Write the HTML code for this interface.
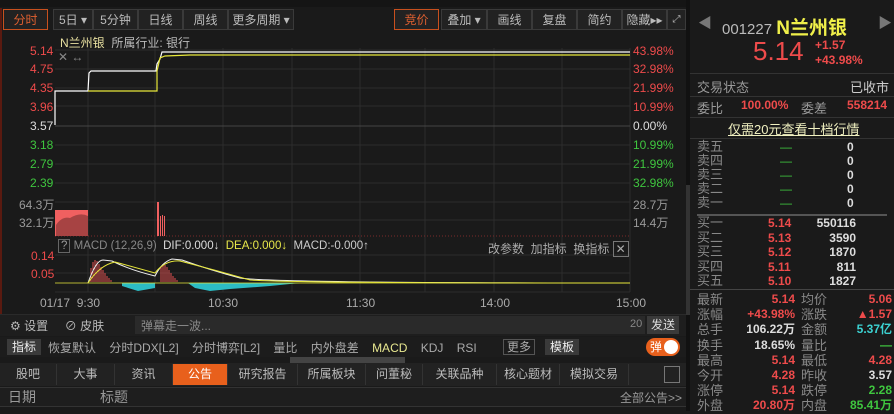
<!DOCTYPE html><html><head><meta charset="utf-8"><style>
*{margin:0;padding:0;box-sizing:border-box}
body{width:894px;height:411px;background:#1a1a1a;overflow:hidden;position:relative;font-family:"Liberation Sans","Noto Sans CJK SC",sans-serif;color:#bbb;font-size:12px}
.a{position:absolute;white-space:nowrap}
.r{color:#ee4b4b}.g{color:#3fc63f}.w{color:#ddd}.y{color:#e8e84a}.c{color:#3cd2d2}
.btn{position:absolute;top:9px;height:21px;line-height:20px;border:1px solid #3a3a3a;background:#222;text-align:center;font-size:12px;color:#bbb}
.tab{position:absolute;top:364px;height:21px;line-height:21px;text-align:center;border-right:1px solid #333;font-size:12px;color:#bbb;background:#222}
.rp div{position:absolute;white-space:nowrap}
</style></head><body>
<div class="a" style="left:0;top:0;width:686px;height:7px;background:#151515"></div>
<div class="btn" style="left:3px;width:45px;border-color:#c8501e;color:#e06030">分时</div>
<div class="btn" style="left:53px;width:40px">5日 ▾</div>
<div class="btn" style="left:93px;width:45px">5分钟</div>
<div class="btn" style="left:138px;width:45px">日线</div>
<div class="btn" style="left:183px;width:45px">周线</div>
<div class="btn" style="left:228px;width:66px">更多周期 ▾</div>
<div class="btn" style="left:394px;width:45px;border-color:#c8501e;color:#e06030">竞价</div>
<div class="btn" style="left:441px;width:46px">叠加 ▾</div>
<div class="btn" style="left:487px;width:45px">画线</div>
<div class="btn" style="left:532px;width:45px">复盘</div>
<div class="btn" style="left:577px;width:45px">简约</div>
<div class="btn" style="left:622px;width:45px">隐藏▸▸</div>
<div class="btn" style="left:667px;width:19px;font-size:10px">⤢</div>
<div class="a" style="left:0;top:8px;width:2px;height:310px;background:#5a1a10"></div>
<div class="a" style="left:686px;top:0;width:4px;height:411px;background:#111"></div>
<div class="a" style="left:686px;top:185px;width:4px;height:130px;background:#333"></div>
<svg class="a" style="left:0;top:30px" width="686" height="290">
<g stroke="#2c2c2c" stroke-width="1">
<line x1="55" y1="20" x2="630" y2="20"/><line x1="55" y1="39" x2="630" y2="39"/><line x1="55" y1="58" x2="630" y2="58"/><line x1="55" y1="76" x2="630" y2="76"/><line x1="55" y1="96" x2="630" y2="96"/><line x1="55" y1="115" x2="630" y2="115"/><line x1="55" y1="134" x2="630" y2="134"/><line x1="55" y1="153" x2="630" y2="153"/><line x1="55" y1="172" x2="630" y2="172"/><line x1="55" y1="190" x2="630" y2="190"/>
<line x1="55" y1="225" x2="630" y2="225"/><line x1="55" y1="243" x2="630" y2="243"/><line x1="55" y1="262" x2="630" y2="262"/>
<line x1="88" y1="18" x2="88" y2="262"/><line x1="155" y1="18" x2="155" y2="262"/><line x1="223" y1="18" x2="223" y2="262"/><line x1="292" y1="18" x2="292" y2="262"/><line x1="360" y1="18" x2="360" y2="262"/><line x1="425" y1="18" x2="425" y2="262"/><line x1="494" y1="18" x2="494" y2="262"/><line x1="562" y1="18" x2="562" y2="262"/><line x1="630" y1="18" x2="630" y2="262"/>
</g>
<line x1="55" y1="96" x2="630" y2="96" stroke="#444"/>
<line x1="55" y1="206" x2="630" y2="206" stroke="#7a2a2a" stroke-dasharray="1 2"/>
<polyline fill="none" stroke="#fff" stroke-width="1.2" points="55,95 55,61 88,61 89,43 91,41 156,41 157,34 160,29 162,22 630,22"/>
<polyline fill="none" stroke="#e8e83a" stroke-width="1.2" points="88,61 157,61 157,41 160,28 165,26 190,25 630,25"/>
<path d="M55,180 L88,180 L88,206 L55,206Z" fill="#f06060"/>
<path d="M56,195 Q62,186 70,188 Q80,182 88,186 L88,206 L56,206Z" fill="#000" opacity="0.3"/>
<rect x="157" y="172" width="2" height="34" fill="#f06060"/><rect x="160" y="186" width="1" height="20" fill="#f06060"/><rect x="162" y="185" width="1" height="21" fill="#f06060"/><rect x="164" y="186" width="1" height="20" fill="#f06060"/>
<g stroke="#e05050"><line x1="91" y1="252" x2="91" y2="238"/><line x1="93" y1="252" x2="93" y2="232"/><line x1="95" y1="252" x2="95" y2="230"/><line x1="97" y1="252" x2="97" y2="231"/><line x1="99" y1="252" x2="99" y2="234"/><line x1="101" y1="252" x2="101" y2="237"/><line x1="103" y1="252" x2="103" y2="240"/><line x1="105" y1="252" x2="105" y2="243"/><line x1="107" y1="252" x2="107" y2="246"/><line x1="109" y1="252" x2="109" y2="248"/><line x1="111" y1="252" x2="111" y2="250"/>
<line x1="161" y1="252" x2="161" y2="237"/><line x1="163" y1="252" x2="163" y2="234"/><line x1="165" y1="252" x2="165" y2="235"/><line x1="167" y1="252" x2="167" y2="237"/><line x1="169" y1="252" x2="169" y2="240"/><line x1="171" y1="252" x2="171" y2="243"/><line x1="173" y1="252" x2="173" y2="246"/><line x1="175" y1="252" x2="175" y2="248"/><line x1="177" y1="252" x2="177" y2="250"/></g>
<path d="M122,253 L155,253 L155,258 L138,261 L122,256Z" fill="#2cbcc4"/>
<path d="M188,253 L300,253 L270,256 L230,259 L210,261 L195,258Z" fill="#2cbcc4"/>
<path d="M88,253 Q96,230 103,230 L112,231 Q130,240 155,246 Q162,232 172,229 L182,230 Q210,240 240,248 Q270,253 630,253" fill="none" stroke="#eee" stroke-width="1"/>
<path d="M88,253 Q100,235 115,232 Q130,236 155,243 Q165,230 180,231 Q215,240 250,250 Q280,253 630,253" fill="none" stroke="#e8e83a" stroke-width="1"/>
<line x1="55" y1="253" x2="630" y2="253" stroke="#e8e83a" stroke-width="0.8"/>
</svg>
<div class="a" style="left:60px;top:34px;font-size:12px"><span style="color:#e8e0a0">N兰州银</span>&nbsp; 所属行业: 银行</div>
<div class="a" style="left:58px;top:50px;color:#888;font-size:12px">✕ ↔</div>
<div class="a r" style="left:30px;top:44px">5.14</div>
<div class="a r" style="left:30px;top:62px">4.75</div>
<div class="a r" style="left:30px;top:81px">4.35</div>
<div class="a r" style="left:30px;top:100px">3.96</div>
<div class="a w" style="left:30px;top:119px">3.57</div>
<div class="a g" style="left:30px;top:138px">3.18</div>
<div class="a g" style="left:30px;top:157px">2.79</div>
<div class="a g" style="left:30px;top:176px">2.39</div>
<div class="a" style="left:19px;top:196px;color:#999">64.3万</div>
<div class="a" style="left:19px;top:214px;color:#999">32.1万</div>
<div class="a r" style="left:633px;top:44px">43.98%</div>
<div class="a r" style="left:633px;top:62px">32.98%</div>
<div class="a r" style="left:633px;top:81px">21.99%</div>
<div class="a r" style="left:633px;top:100px">10.99%</div>
<div class="a w" style="left:633px;top:119px">0.00%</div>
<div class="a g" style="left:633px;top:138px">10.99%</div>
<div class="a g" style="left:633px;top:157px">21.99%</div>
<div class="a g" style="left:633px;top:176px">32.98%</div>
<div class="a" style="left:633px;top:196px;color:#999">28.7万</div>
<div class="a" style="left:633px;top:214px;color:#999">14.4万</div>
<div class="a" style="left:58px;top:240px;font-size:11.5px"><span style="border:1px solid #666;padding:0 2px;color:#999">?</span> <span style="color:#888">MACD (12,26,9)</span> &nbsp;<span class="w">DIF:0.000↓</span> &nbsp;<span class="y">DEA:0.000↓</span> &nbsp;<span style="color:#ccc">MACD:-0.000↑</span></div>
<div class="a" style="left:488px;top:240px;color:#aaa">改参数 &nbsp;加指标 &nbsp;换指标 <span style="border:1px solid #777;padding:0 2px">✕</span></div>
<div class="a r" style="left:31px;top:249px">0.14</div>
<div class="a r" style="left:31px;top:267px">0.05</div>
<div class="a" style="left:40px;top:296px;color:#aaa">01/17 &nbsp;9:30</div>
<div class="a" style="left:208px;top:296px;color:#aaa">10:30</div>
<div class="a" style="left:346px;top:296px;color:#aaa">11:30</div>
<div class="a" style="left:480px;top:296px;color:#aaa">14:00</div>
<div class="a" style="left:616px;top:296px;color:#aaa">15:00</div>
<div class="a" style="left:0;top:314px;width:686px;height:22px;background:#1e1e1e;border-top:1px solid #2a2a2a"></div>
<div class="a" style="left:10px;top:317px;color:#bbb">⚙ 设置 &nbsp; &nbsp; ⊘ 皮肤</div>
<div class="a" style="left:135px;top:316px;width:510px;height:18px;background:#2a2a2a;color:#888;padding:1px 6px">弹幕走一波...</div>
<div class="a" style="left:630px;top:318px;color:#888;font-size:11px">20</div>
<div class="a" style="left:647px;top:316px;width:32px;height:18px;background:#3a3a3a;color:#ddd;text-align:center;line-height:18px">发送</div>
<div class="a" style="left:0;top:337px;width:686px;height:20px;background:#1c1c1c"></div>
<div class="a" style="left:7px;top:339px;width:34px;height:16px;background:#3a3a3a;color:#eee;text-align:center;line-height:16px">指标</div>
<div class="a" style="left:48px;top:339px;color:#aaa">恢复默认 &nbsp; &nbsp;分时DDX[L2] &nbsp; &nbsp;分时博弈[L2] &nbsp; &nbsp;量比 &nbsp; &nbsp;内外盘差 &nbsp; &nbsp;<span style="color:#e8e890">MACD</span> &nbsp; &nbsp;KDJ &nbsp; &nbsp;RSI</div>
<div class="a" style="left:503px;top:339px;width:32px;height:16px;border:1px solid #555;color:#aaa;text-align:center;line-height:14px">更多</div>
<div class="a" style="left:545px;top:339px;width:34px;height:16px;background:#3a3a3a;color:#eee;text-align:center;line-height:16px">模板</div>
<div class="a" style="left:646px;top:338px;width:34px;height:18px;border-radius:9px;background:#e8601c;color:#fff;padding-left:4px;line-height:18px">弹<span style="position:absolute;right:2px;top:2px;width:14px;height:14px;border-radius:7px;background:#fff"></span></div>
<div class="a" style="left:290px;top:357px;width:115px;height:6px;background:#444"></div>
<div class="a" style="left:0;top:363px;width:686px;height:23px;background:#222"></div>
<div class="tab" style="left:0;width:57px">股吧</div><div class="tab" style="left:57px;width:58px">大事</div><div class="tab" style="left:115px;width:58px">资讯</div>
<div class="tab" style="left:173px;width:55px;background:#e8601c;color:#fff">公告</div>
<div class="tab" style="left:228px;width:70px">研究报告</div><div class="tab" style="left:298px;width:68px">所属板块</div><div class="tab" style="left:366px;width:57px">问董秘</div><div class="tab" style="left:423px;width:74px">关联品种</div><div class="tab" style="left:497px;width:63px">核心题材</div><div class="tab" style="left:560px;width:69px">模拟交易</div>
<div class="a" style="left:664px;top:366px;width:16px;height:17px;border:1px solid #777"></div>
<div class="a" style="left:0;top:387px;width:686px;height:20px;background:#1e1e1e;border-top:1px solid #333;border-bottom:1px solid #333"></div>
<div class="a" style="left:8px;top:387px;font-size:14px;color:#999">日期</div>
<div class="a" style="left:100px;top:387px;font-size:14px;color:#999">标题</div>
<div class="a" style="left:620px;top:389px;color:#999">全部公告&gt;&gt;</div>
<div class="rp">
<div style="left:698px;top:13px;color:#777;font-size:14px">◀</div><div style="left:878px;top:13px;color:#777;font-size:14px">▶</div>
<div style="left:722px;top:13px;color:#bbb;font-size:15px">001227 <b style="color:#f0f04a;font-size:19px">N兰州银</b></div>
<div style="left:753px;top:36px;color:#ee4b4b;font-size:26px">5.14</div>
<div style="left:815px;top:38px;color:#ee4b4b;font-size:12px;font-weight:bold;line-height:15px">+1.57<br>+43.98%</div>
<div style="left:690px;top:73px;width:204px;height:1px;background:#333"></div>
<div style="left:697px;top:77px;color:#999;font-size:13px">交易状态</div><div style="left:850px;top:77px;color:#ccc;font-size:13px">已收市</div>
<div style="left:690px;top:96px;width:204px;height:1px;background:#333"></div>
<div style="left:697px;top:98px;color:#999;font-size:13px">委比</div><div style="left:741px;top:98px;color:#ee4b4b;font-weight:bold">100.00%</div><div style="left:801px;top:98px;color:#999;font-size:13px">委差</div><div style="left:847px;top:98px;color:#ee4b4b;font-weight:bold">558214</div>
<div style="left:690px;top:117px;width:204px;height:1px;background:#333"></div>
<div style="left:728px;top:119px;color:#f0f0c0;font-size:13px;text-decoration:underline">仅需20元查看十档行情</div>
<div style="left:690px;top:138px;width:204px;height:1px;background:#333"></div>
<div style="left:697px;top:140px;color:#888;font-size:13px;line-height:14px">卖五<br>卖四<br>卖三<br>卖二<br>卖一</div>
<div style="left:780px;top:140px;color:#3fc63f;line-height:14px">—<br>—<br>—<br>—<br>—</div>
<div style="left:847px;top:140px;color:#ddd;font-weight:bold;line-height:14px">0<br>0<br>0<br>0<br>0</div>
<div style="left:697px;top:214px;width:190px;height:2px;background:#555"></div>
<div style="left:697px;top:216px;color:#888;font-size:13px;line-height:14.6px">买一<br>买二<br>买三<br>买四<br>买五</div>
<div style="left:768px;top:216px;color:#ee4b4b;font-weight:bold;line-height:14.6px">5.14<br>5.13<br>5.12<br>5.11<br>5.10</div>
<div style="left:808px;top:216px;color:#ddd;font-weight:bold;line-height:14.6px;text-align:right;width:48px">550116<br>3590<br>1870<br>811<br>1827</div>
<div style="left:690px;top:289px;width:204px;height:1px;background:#444"></div>
<div style="left:697px;top:292px;color:#888;font-size:13px;line-height:15.2px">最新<br>涨幅<br>总手<br>换手<br>最高<br>今开<br>涨停<br>外盘</div>
<div style="left:730px;top:292px;width:65px;text-align:right;font-weight:bold;line-height:15.2px"><span class="r">5.14</span><br><span class="r">+43.98%</span><br><span class="w">106.22万</span><br><span class="w">18.65%</span><br><span class="r">5.14</span><br><span class="r">4.28</span><br><span class="r">5.14</span><br><span class="r">20.80万</span></div>
<div style="left:801px;top:292px;color:#888;font-size:13px;line-height:15.2px">均价<br>涨跌<br>金额<br>量比<br>最低<br>昨收<br>跌停<br>内盘</div>
<div style="left:834px;top:292px;width:58px;text-align:right;font-weight:bold;line-height:15.2px"><span class="r">5.06</span><br><span class="r">▲1.57</span><br><span class="c">5.37亿</span><br><span class="g">—</span><br><span class="r">4.28</span><br><span class="w">3.57</span><br><span class="g">2.28</span><br><span class="g">85.41万</span></div>
</div>
</body></html>
